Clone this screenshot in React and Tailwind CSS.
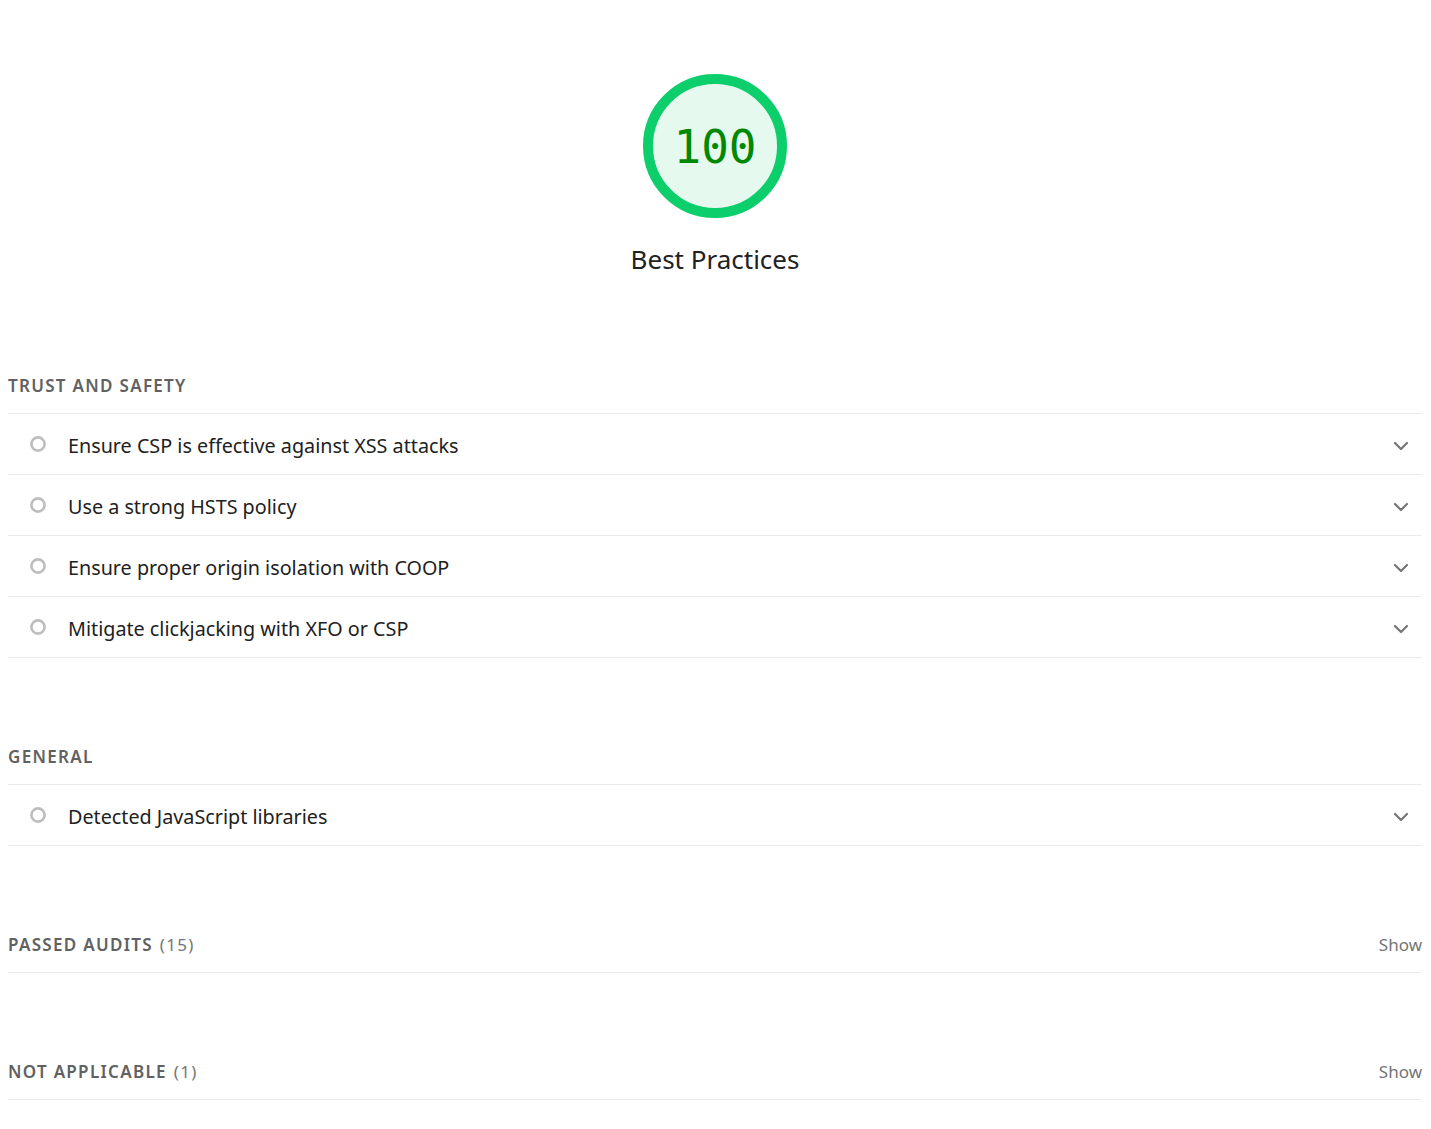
import React from 'react';

// Audit groups shown under the score gauge
const groups = [
  {
    title: 'Trust and Safety',
    audits: [
      'Ensure CSP is effective against XSS attacks',
      'Use a strong HSTS policy',
      'Ensure proper origin isolation with COOP',
      'Mitigate clickjacking with XFO or CSP',
    ],
  },
  {
    title: 'General',
    audits: [ 'Detected JavaScript libraries' ],
  },
];

const collapsed = [
  { title: 'Passed audits', count: 15 },
  { title: 'Not applicable', count: 1 },
];

const font = { fontFamily: '"Noto Sans", "Open Sans", Arial, sans-serif' };

const Chevron = () => (
  <svg className="mt-[3px]" width="16" height="10" viewBox="0 0 16 10" fill="none">
    <path d="M2 2l6 6 6-6" stroke="#757575" strokeWidth="2.2" strokeLinecap="round" strokeLinejoin="round" />
  </svg>
);

const InfoCircle = () => (
  <svg width="18" height="18" viewBox="0 0 18 18" fill="none">
    <circle cx="9" cy="9" r="6.6" stroke="#bdbdbd" strokeWidth="2.6" />
  </svg>
);

const Gauge = () => (
  <div className="flex flex-col items-center pt-[74px]">
    <div className="relative w-[144px] h-[144px]">
      <svg width="144" height="144" viewBox="0 0 144 144">
        <circle cx="72" cy="72" r="67" fill="#e6f9ef" stroke="#0cce6b" strokeWidth="10" />
      </svg>
      <div
        className="absolute inset-0 flex items-center justify-center pt-[2px] text-[46px] text-[#008800] leading-none"
        style={ { fontFamily: '"DejaVu Sans Mono", "Liberation Mono", monospace' } }
      >
        100
      </div>
    </div>
    <div className="mt-[25px] text-[26px] leading-[32px] text-[#212121]">Best Practices</div>
  </div>
);

const GroupHeader = ( { title, count, show } ) => (
  <div className="h-[55px] flex items-center justify-between border-b border-[#ebebeb]">
    <div className="text-[17px] font-semibold uppercase tracking-[1.3px] text-[#616161]">
      { title }
      { count !== undefined && (
        <span className="font-normal text-[#757575] ml-[7px]">({ count })</span>
      ) }
    </div>
    { show && <div className="text-[17px] text-[#757575]">Show</div> }
  </div>
);

const AuditRow = ( { text } ) => (
  <div className="h-[61px] flex items-center border-b border-[#ebebeb] pl-[21px] pr-[13px]">
    <InfoCircle />
    <div className="ml-[21px] flex-1 pt-[3px] text-[19.75px] text-[#212121]">{ text }</div>
    <Chevron />
  </div>
);

export default function App ()
{
  return (
    <div className="min-h-screen bg-white pl-2 pr-[9px] pb-[30px]" style={ font }>
      <Gauge />

      {/* Audit groups */ }
      <div className="mt-[84px]">
        { groups.map( ( g, i ) => (
          <div key={ g.title } className={ i > 0 ? 'mt-[72px]' : '' }>
            <GroupHeader title={ g.title } />
            { g.audits.map( ( a ) => <AuditRow key={ a } text={ a } /> ) }
          </div>
        ) ) }

        { collapsed.map( ( c ) => (
          <div key={ c.title } className="mt-[72px]">
            <GroupHeader title={ c.title } count={ c.count } show />
          </div>
        ) ) }
      </div>
    </div>
  );
}
